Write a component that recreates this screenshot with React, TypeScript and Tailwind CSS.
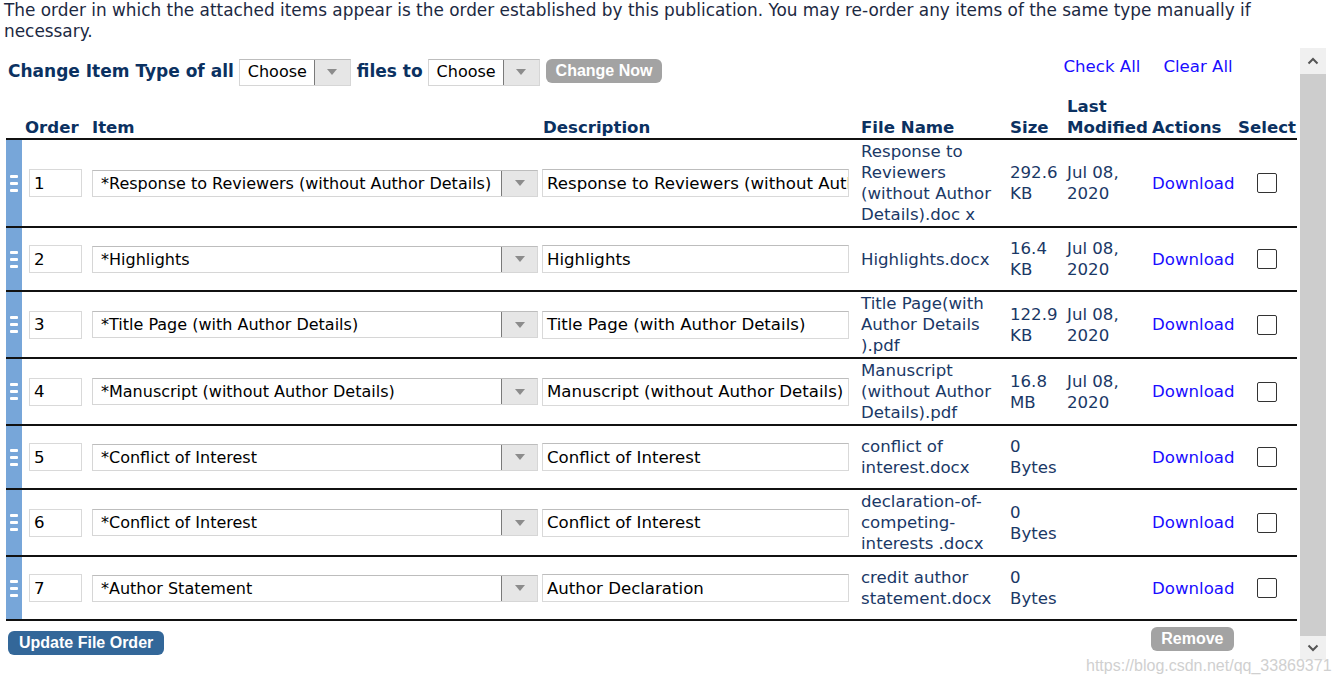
import React from "react";

type Row = {
  n: number;
  item: string;
  desc: string;
  file: string[];
  size: string[];
  date: string[];
  h: string;
};

const rows: Row[] = [
  { n: 1, item: "*Response to Reviewers (without Author Details)", desc: "Response to Reviewers (without Author Details)", file: ["Response to", "Reviewers", "(without Author", "Details).doc x"], size: ["292.6", "KB"], date: ["Jul 08,", "2020"], h: "h-[88px]" },
  { n: 2, item: "*Highlights", desc: "Highlights", file: ["Highlights.docx"], size: ["16.4", "KB"], date: ["Jul 08,", "2020"], h: "h-[64px]" },
  { n: 3, item: "*Title Page (with Author Details)", desc: "Title Page (with Author Details)", file: ["Title Page(with", "Author Details", ").pdf"], size: ["122.9", "KB"], date: ["Jul 08,", "2020"], h: "h-[67px]" },
  { n: 4, item: "*Manuscript (without Author Details)", desc: "Manuscript (without Author Details)", file: ["Manuscript", "(without Author", "Details).pdf"], size: ["16.8", "MB"], date: ["Jul 08,", "2020"], h: "h-[67px]" },
  { n: 5, item: "*Conflict of Interest", desc: "Conflict of Interest", file: ["conflict of", "interest.docx"], size: ["0", "Bytes"], date: [], h: "h-[64px]" },
  { n: 6, item: "*Conflict of Interest", desc: "Conflict of Interest", file: ["declaration-of-", "competing-", "interests .docx"], size: ["0", "Bytes"], date: [], h: "h-[67px]" },
  { n: 7, item: "*Author Statement", desc: "Author Declaration", file: ["credit author", "statement.docx"], size: ["0", "Bytes"], date: [], h: "h-[64px]" },
];

function Arrow() {
  return (
    <svg width="10" height="6" viewBox="0 0 10 6" className="block">
      <path d="M0 0 L10 0 L5 6 Z" fill="#8c8c8c" />
    </svg>
  );
}

function FakeSelect({ text, w, arrowW }: { text: string; w: string; arrowW: string }) {
  return (
    <div className={`flex h-[27px] ${w} border border-[#d6d6d6] border-t-[#bdbdbd] bg-white`}>
      <div className="flex-1 flex items-center pl-[8px] text-[16px] text-black whitespace-nowrap overflow-hidden">{text}</div>
      <div className={`${arrowW} flex items-center justify-center bg-[#e6e6e6] border-l border-[#7a7a7a]`}>
        <Arrow />
      </div>
    </div>
  );
}

function Handle() {
  return (
    <div className="flex flex-col gap-[4px] items-center">
      <div className="w-[8px] h-[3px] bg-white rounded-[1px]" />
      <div className="w-[8px] h-[3px] bg-white rounded-[1px]" />
      <div className="w-[8px] h-[3px] bg-white rounded-[1px]" />
    </div>
  );
}

export default function App() {
  const font = { fontFamily: '"DejaVu Sans", Verdana, sans-serif' };
  const arial = { fontFamily: '"Liberation Sans", Arial, sans-serif' };
  return (
    <div className="relative w-[1337px] h-[681px] bg-white overflow-hidden text-[#1a3866]" style={font}>
      <p className="pl-[4px] pt-0 text-[16.9px] leading-[21px] text-[#1c2942] whitespace-nowrap">
        The order in which the attached items appear is the order established by this publication. You may re-order any items of the same type manually if
        <br />
        necessary.
      </p>
      <div className="flex mt-[6px]">
        <div className="w-[1300px]">
          {/* toolbar */}
          <div className="flex items-center h-[48px] pl-[8px]">
            <span className="font-bold text-[17px] text-[#0b3161] mr-[5px] mt-[-1px]">Change Item Type of all</span>
            <FakeSelect text="Choose" w="w-[112px]" arrowW="w-[36px]" />
            <span className="font-bold text-[17px] text-[#0b3161] ml-[6px] mr-[5px] mt-[-1px]">files to</span>
            <FakeSelect text="Choose" w="w-[112px]" arrowW="w-[36px]" />
            <button
              className="ml-[6px] h-[24px] px-[10px] rounded-[6px] bg-[#a3a3a3] text-white font-bold text-[16px] leading-[24px] mt-[-2px]"
              style={arial}
            >
              Change Now
            </button>
            <span className="ml-[401px] mt-[-10px] text-[#1a0dff] text-[16.6px]">Check All</span>
            <span className="ml-[23px] mt-[-10px] text-[#1a0dff] text-[16.6px]">Clear All</span>
          </div>

          <table className="table-fixed border-collapse ml-[6px] w-[1291px]">
            <colgroup>
              <col className="w-[16px]" />
              <col className="w-[66px]" />
              <col className="w-[452px]" />
              <col className="w-[315px]" />
              <col className="w-[150px]" />
              <col className="w-[57px]" />
              <col className="w-[86px]" />
              <col className="w-[84px]" />
              <col className="w-[65px]" />
            </colgroup>
            <thead>
              <tr className="border-b-2 border-[#111] text-[16.6px] font-bold text-[#0b3161] leading-[21px] align-bottom">
                <th className="p-0" />
                <th className="p-0 pl-[3px] text-left">Order</th>
                <th className="p-0 pl-[4px] text-left">Item</th>
                <th className="p-0 pl-[3px] text-left">Description</th>
                <th className="p-0 pl-[6px] text-left">File Name</th>
                <th className="p-0 pl-[5px] text-left">Size</th>
                <th className="p-0 pl-[5px] text-left whitespace-nowrap">Last<br />Modified</th>
                <th className="p-0 pl-[4px] text-left">Actions</th>
                <th className="p-0 pl-[6px] text-left">Select</th>
              </tr>
            </thead>
            <tbody>
              {rows.map((r) => (
                <tr key={r.n} className={`border-b-2 border-[#111] ${r.h} text-[16.6px] leading-[21px]`}>
                  <td className="p-0 bg-[#77a6d9] align-middle">
                    <div className="flex justify-center pr-[1px]">
                      <Handle />
                    </div>
                  </td>
                  <td className="p-0 pl-[7px] align-middle">
                    <div className="w-[53px] h-[28px] border border-[#d9d9d9] bg-white flex items-center pl-[4px] text-black">{r.n}</div>
                  </td>
                  <td className="p-0 pl-[4px] align-middle">
                    <FakeSelect text={r.item} w="w-[446px]" arrowW="w-[36px]" />
                  </td>
                  <td className="p-0 pl-[2px] align-middle">
                    <div className="w-[307px] h-[28px] border border-[#d9d9d9] border-t-[#bdbdbd] bg-white flex items-center pl-[4px] text-black whitespace-nowrap overflow-hidden">
                      {r.desc}
                    </div>
                  </td>
                  <td className="p-0 pl-[6px] align-middle whitespace-nowrap">
                    {r.file.map((l, i) => (
                      <div key={i}>{l}</div>
                    ))}
                  </td>
                  <td className="p-0 pl-[5px] align-middle whitespace-nowrap">
                    {r.size.map((l, i) => (
                      <div key={i}>{l}</div>
                    ))}
                  </td>
                  <td className="p-0 pl-[5px] align-middle whitespace-nowrap">
                    {r.date.map((l, i) => (
                      <div key={i}>{l}</div>
                    ))}
                  </td>
                  <td className="p-0 pl-[4px] align-middle text-[#1a0dff]">Download</td>
                  <td className="p-0 pl-[25px] align-middle">
                    <div className="w-[20px] h-[20px] border-[1.5px] border-[#333] rounded-[2px] bg-white" />
                  </td>
                </tr>
              ))}
            </tbody>
          </table>

          <div className="flex items-start pl-[8px]">
            <button
              className="mt-[10px] h-[24px] px-[11px] rounded-[6px] bg-[#336799] text-white font-bold text-[16px] leading-[24px]"
              style={arial}
            >
              Update File Order
            </button>
            <button
              className="ml-[987px] mt-[6px] h-[24px] px-[10px] rounded-[6px] bg-[#a3a3a3] text-white font-bold text-[16px] leading-[24px]"
              style={arial}
            >
              Remove
            </button>
          </div>
        </div>

        {/* scrollbar */}
        <div className="w-[26px] h-[612px] flex flex-col bg-[#f0f0f0]">
          <div className="h-[26px] flex items-center justify-center">
            <svg width="12" height="8" viewBox="0 0 12 8">
              <path d="M1.5 6.5 L6 2 L10.5 6.5" stroke="#555" strokeWidth="2" fill="none" />
            </svg>
          </div>
          <div className="flex-1 bg-[#cdcdcd]" />
          <div className="h-[24px] flex items-center justify-center">
            <svg width="12" height="8" viewBox="0 0 12 8">
              <path d="M1.5 1.5 L6 6 L10.5 1.5" stroke="#555" strokeWidth="2" fill="none" />
            </svg>
          </div>
        </div>
      </div>

      <div
        className="absolute left-[1086px] top-[654px] text-[16px] text-[#d0d0d0] whitespace-nowrap"
        style={arial}
      >
        https://blog.csdn.net/qq_33869371
      </div>
    </div>
  );
}
